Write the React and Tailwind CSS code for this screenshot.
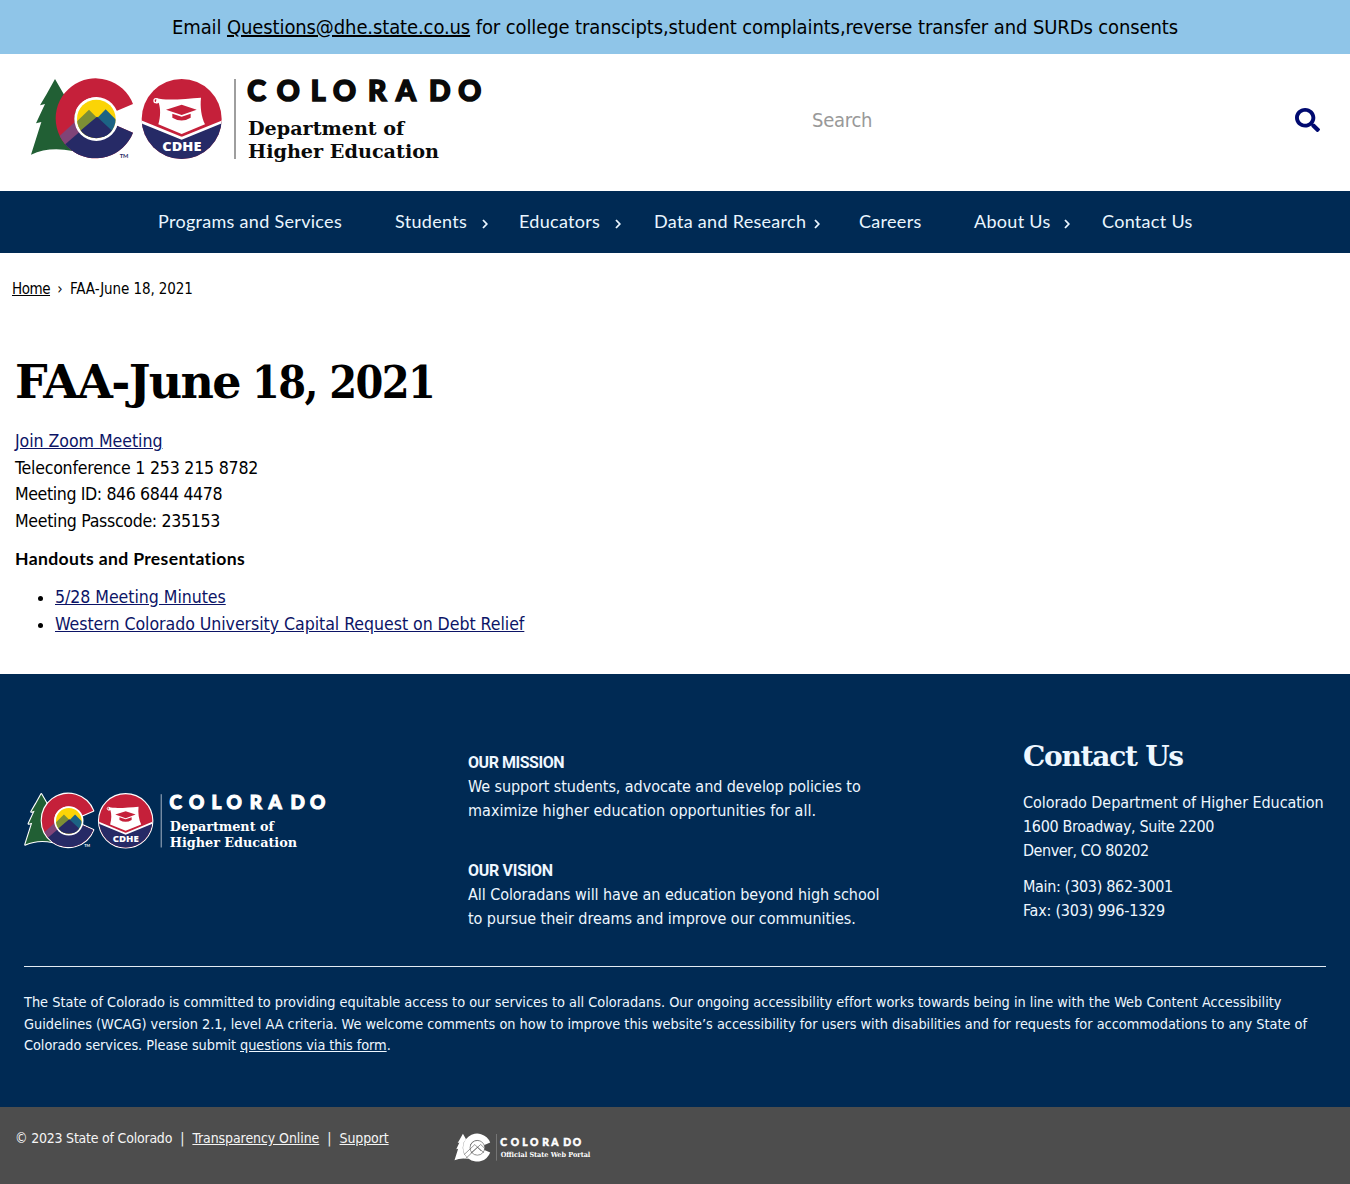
import React from 'react';

const COLORADO = [
  ['C', 682], ['O', 770], ['L', 872], ['O', 939], ['R', 1044], ['A', 1128], ['D', 1227], ['O', 1315],
];

const TREE = 'M105 27 L80 72 L60 106 L75 102 L48 160 L64 156 L33 254 Q88 228 158 243 L200 200 L190 150 L150 105 Z';
const C_SHAPE = 'M339 102 A120 120 0 1 0 339 188 L284 164 A62 62 0 1 1 284 125 Z';

function AgencyLogo({ light = false, className }) {
  const ink = light ? '#ffffff' : '#0a0a0a';
  const id = light ? 'l' : 'd';
  const edge = light ? { stroke: '#fff', strokeWidth: 10, paintOrder: 'stroke', strokeLinejoin: 'round' } : {};
  return (
    <svg viewBox="0 0 1410 300" className={className} role="img" aria-label="Colorado Department of Higher Education">
      <defs>
        <clipPath id={`ring-${id}`}><path d={C_SHAPE} /></clipPath>
        <clipPath id={`sun-${id}`}><circle cx="229" cy="147" r="58" /></clipPath>
        <clipPath id={`seal-${id}`}><circle cx="485" cy="147" r="120" /></clipPath>
      </defs>
      <path d={TREE} fill="#215f34" {...edge} />
      <path d={C_SHAPE} fill="#c5203a" {...edge} />
      <g clipPath={`url(#ring-${id})`}>
        <path d="M108 208 L180 142 L260 220 L140 270Z" fill="#804478" />
        <path d="M120 236 L230 142 L350 150 L350 280 L120 280Z" fill="#262a66" />
      </g>
      <circle cx="229" cy="147" r="66" fill="#fff" />
      <g clipPath={`url(#sun-${id})`}>
        <rect x="165" y="85" width="130" height="130" fill="#fbd406" />
        <path d="M150 174 L207 119 L270 182 L200 210Z" fill="#7d8f35" />
        <path d="M195 182 L257 118 L310 172 L300 220Z" fill="#1c6384" />
        <path d="M208 160 L232 141 L257 168 L230 190Z" fill="#3c7068" />
        <path d="M150 208 L231 140 L300 205 L300 220 L150 220Z" fill="#262a66" />
      </g>
      <text x="299" y="263" fontSize="17" fontWeight="700" fontFamily="Lato, sans-serif" fill={light ? '#fff' : '#262a66'}>TM</text>
      <circle cx="485" cy="147" r="120" fill="#c5203a" {...edge} />
      <g clipPath={`url(#seal-${id})`}>
        <path d="M360 153 L485 204 L610 153 V280 H360Z" fill="#262a66" />
        <path d="M360 154 L485 205 L610 154" fill="none" stroke="#fff" strokeWidth="8" />
      </g>
      <path d="M410 85 C440 93 500 86 543 83 C540 110 544 140 555 163 L485 192 L415 163 C422 140 422 115 416 98 Q411 102 407 99" fill="#fff" />
      <circle cx="408" cy="92" r="6" fill="none" stroke="#fff" strokeWidth="4" />
      <path d="M438 119 L485 104 L530 119 L485 135Z" fill="#c5203a" />
      <path d="M457 131 L485 140 L512 131 V143 Q485 160 457 143Z" fill="#c5203a" />
      <text x="427" y="243" textLength="117" lengthAdjust="spacingAndGlyphs" fontSize="38" fontWeight="800" fontFamily="'Open Sans', sans-serif" fill="#fff">CDHE</text>
      <rect x="643" y="27" width="4" height="240" fill={light ? '#b9c4d2' : '#6f6f6f'} />
      <g fill={ink} stroke={ink} strokeWidth="5" fontFamily="Lato, sans-serif" fontWeight="900" fontSize="85">
        {COLORADO.map(([ch, x]) => <text key={x} x={x} y="92">{ch}</text>)}
      </g>
      <g fill={ink} fontFamily="'DejaVu Serif', serif" fontWeight="700" fontSize="58">
        <text x="684" y="195" textLength="469" lengthAdjust="spacingAndGlyphs">Department of</text>
        <text x="684" y="265" textLength="573" lengthAdjust="spacingAndGlyphs">Higher Education</text>
      </g>
    </svg>
  );
}

const PORTAL = [['C', 181], ['O', 212], ['L', 247], ['O', 270], ['R', 307], ['A', 334], ['D', 370], ['O', 398]];

function PortalLogo({ className }) {
  return (
    <svg viewBox="0 0 510 165" className={className} role="img" aria-label="Colorado Official State Web Portal">
      <g transform="translate(32 32) scale(.35)">
        <path d={TREE} fill="#fff" />
        <circle cx="229" cy="147" r="122" fill="none" stroke="#4d4d4d" strokeWidth="5" />
        <path d={C_SHAPE} fill="#fff" />
        <circle cx="229" cy="147" r="63" fill="#fff" stroke="#4d4d4d" strokeWidth="5" />
        <path d="M115 205 L207 119 L262 175 M128 240 L257 118 L290 150 M172 192 L230 142 L285 188" fill="none" stroke="#4d4d4d" strokeWidth="5" />
      </g>
      <rect x="169" y="42" width="2" height="80" fill="#8a8a8a" />
      <g fill="#fff" stroke="#fff" strokeWidth="1.5" fontFamily="Lato, sans-serif" fontWeight="900" fontSize="31">
        {PORTAL.map(([ch, x]) => <text key={x} x={x} y="77">{ch}</text>)}
      </g>
      <text x="182" y="110" textLength="269" lengthAdjust="spacingAndGlyphs" fill="#fff" fontSize="21" fontWeight="700" fontFamily="'DejaVu Serif Condensed', 'DejaVu Serif', serif">Official State Web Portal</text>
    </svg>
  );
}

function Chevron({ className }) {
  return (
    <svg viewBox="0 0 6 10" className={className} fill="none" stroke="currentColor" strokeWidth="1.8" aria-hidden="true">
      <path d="M1 1 L4.8 5 L1 9" />
    </svg>
  );
}

function NavItem({ label, width, arrow }) {
  return (
    <li className={`flex items-center pl-[27px] ${width}`}>
      <a href="#" className="whitespace-nowrap">{label}</a>
      {arrow && <Chevron className={`mt-[4px] h-[10px] w-[6px] ${arrow}`} />}
    </li>
  );
}

export default function App() {
  return (
    <div className="min-h-[1184px] w-full bg-white font-['DejaVu_Sans_Condensed','Noto_Sans',sans-serif] text-black">
      <div className="flex h-[54px] items-center justify-center bg-[#8fc5e8] text-[20px] tracking-[-0.107px]">
        <p className="whitespace-nowrap">
          Email <a href="#" className="underline">Questions@dhe.state.co.us</a> for college transcipts,student complaints,reverse transfer and SURDs consents
        </p>
      </div>

      <header className="flex h-[137px] items-start justify-between pl-5 pr-[30px]">
        <AgencyLogo className="mt-4 h-[100px] w-[470px]" />
        <div className="mt-[50px] flex h-8 w-[508px] items-center justify-between">
          <span className="text-[20px] tracking-[-0.25px] text-[#999]">Search</span>
          <svg viewBox="0 0 512 512" preserveAspectRatio="none" className="h-[24px] w-[25px]" fill="#000a70" aria-label="Search">
            <path d="M505 442.700 405.300 343c-4.500-4.500-10.600-7-17-7H372c27.600-35.300 44-79.700 44-128C416 93.100 322.900 0 208 0S0 93.100 0 208s93.100 208 208 208c48.300 0 92.700-16.400 128-44v16.300c0 6.400 2.500 12.500 7 17l99.700 99.700c9.400 9.400 24.600 9.400 33.900 0l28.300-28.300c9.400-9.400 9.400-24.600.1-34zM208 336c-70.700 0-128-57.200-128-128 0-70.700 57.200-128 128-128 70.700 0 128 57.200 128 128 0 70.700-57.200 128-128 128z" />
          </svg>
        </div>
      </header>

      <nav className="flex h-[62px] justify-center bg-[#002a54]">
        <ul className="flex w-[1088px] pb-px font-[Lato,sans-serif] text-[18px] tracking-[0.3px] text-[#eaf6ff]">
          <NavItem label="Programs and Services" width="w-[237px]" />
          <NavItem label="Students" width="w-[124px]" arrow="ml-[15px]" />
          <NavItem label="Educators" width="w-[135px]" arrow="ml-[15px]" />
          <NavItem label="Data and Research" width="w-[205px]" arrow="ml-[8px]" />
          <NavItem label="Careers" width="w-[115px]" />
          <NavItem label="About Us" width="w-[128px]" arrow="ml-[13px]" />
          <NavItem label="Contact Us" width="w-[144px]" />
        </ul>
      </nav>

      <div className="flex h-[72px] items-center pl-3 text-[15px] tracking-[-0.1px]">
        <a href="#" className="w-[38px] tracking-[-0.46px] underline">Home</a>
        <span className="w-[20px] text-center">›</span>
        <span>FAA-June 18, 2021</span>
      </div>

      <main className="h-[349px] px-[15px] text-[17.6px] leading-[26.600px] tracking-[-0.05px]">
        <h1 className="pt-[27px] font-['DejaVu_Serif',serif] text-[46px] font-bold leading-[60px] tracking-[-1.700px]">
          FAA-June<span className="font-['DejaVu_Serif_Condensed','DejaVu_Serif',serif] text-[44.500px] tracking-[-1.600px]"> 18, 2021</span>
        </h1>
        <p className="mt-4">
          <a href="#" className="text-[#0c1466] underline">Join Zoom Meeting</a><br />
          <span className="tracking-[-0.22px]">Teleconference 1 253 215 8782</span><br />
          <span className="tracking-[-0.39px]">Meeting ID: 846 6844 4478</span><br />
          <span className="tracking-[-0.32px]">Meeting Passcode: 235153</span>
        </p>
        <p className="mt-[11.500px] font-[Lato,sans-serif] font-bold tracking-[0.33px]">Handouts and Presentations</p>
        <ul className="mt-3 list-disc pl-10">
          <li><a href="#" className="text-[#0c1466] underline">5/28 Meeting Minutes</a></li>
          <li><a href="#" className="text-[#0c1466] underline">Western Colorado University Capital Request on Debt Relief</a></li>
        </ul>
      </main>

      <footer>
        <div className="h-[433px] bg-[#002a54] text-[#eef7ff]">
          <div className="flex h-[292px] pl-[18px] text-[16px] leading-6 tracking-[-0.065px]">
            <AgencyLogo light className="mt-[114px] h-[67px] w-[313px] shrink-0" />
            <div className="ml-[137px] w-[555px] shrink-0 whitespace-nowrap pt-[77px]">
              <h2 className="font-[Roboto,sans-serif] font-bold tracking-[-0.47px]">OUR MISSION</h2>
              <p>We support students, advocate and develop policies to<br /><span className="tracking-[0.02px]">maximize higher education opportunities for all.</span></p>
              <h2 className="mt-9 font-[Roboto,sans-serif] font-bold tracking-[-0.3px]">OUR VISION</h2>
              <p>All Coloradans will have an education beyond high school<br />to pursue their dreams and improve our communities.</p>
            </div>
            <div className="whitespace-nowrap pt-[63px]">
              <h2 className="font-['DejaVu_Serif',serif] text-[28px] font-bold leading-10 tracking-[-1.250px]">Contact Us</h2>
              <address className="mt-[14px] not-italic">
                Colorado Department of Higher Education<br />
                <span className="tracking-[-0.34px]">1600 Broadway, Suite 2200</span><br />
                <span className="tracking-[-0.47px]">Denver, CO 80202</span>
              </address>
              <p className="mt-3 tracking-[-0.32px]">Main: (303) 862-3001<br /><span className="tracking-[-0.22px]">Fax: (303) 996-1329</span></p>
            </div>
          </div>
          <div className="mx-6 border-t border-[#e3ebf3] pt-[25px]">
            <p className="whitespace-nowrap text-[14.400px] leading-[21.600px] tracking-[-0.02px]">
              <span className="tracking-[-0.005px]">The State of Colorado is committed to providing equitable access to our services to all Coloradans. Our ongoing accessibility effort works towards being in line with the Web Content Accessibility</span><br />
              Guidelines (WCAG) version 2.1, level AA criteria. We welcome comments on how to improve this website’s accessibility for users with disabilities and for requests for accommodations to any State of<br />
              <span className="tracking-[-0.060px]">Colorado services. Please submit <a href="#" className="underline">questions via this form</a>.</span>
            </p>
          </div>
        </div>
        <div className="flex h-[77px] bg-[#4d4d4d] pl-[15px] text-[14px] text-[#f5f5f5]">
          <div className="flex w-[425px] gap-[8px] pt-[21px] leading-5">
            <span className="tracking-[-0.22px]">© 2023 State of Colorado</span>
            <span>|</span>
            <a href="#" className="tracking-[-0.08px] underline">Transparency Online</a>
            <span>|</span>
            <a href="#" className="tracking-[-0.1px] underline">Support</a>
          </div>
          <PortalLogo className="mt-[13px] h-[55px] w-[170px]" />
        </div>
      </footer>
    </div>
  );
}
